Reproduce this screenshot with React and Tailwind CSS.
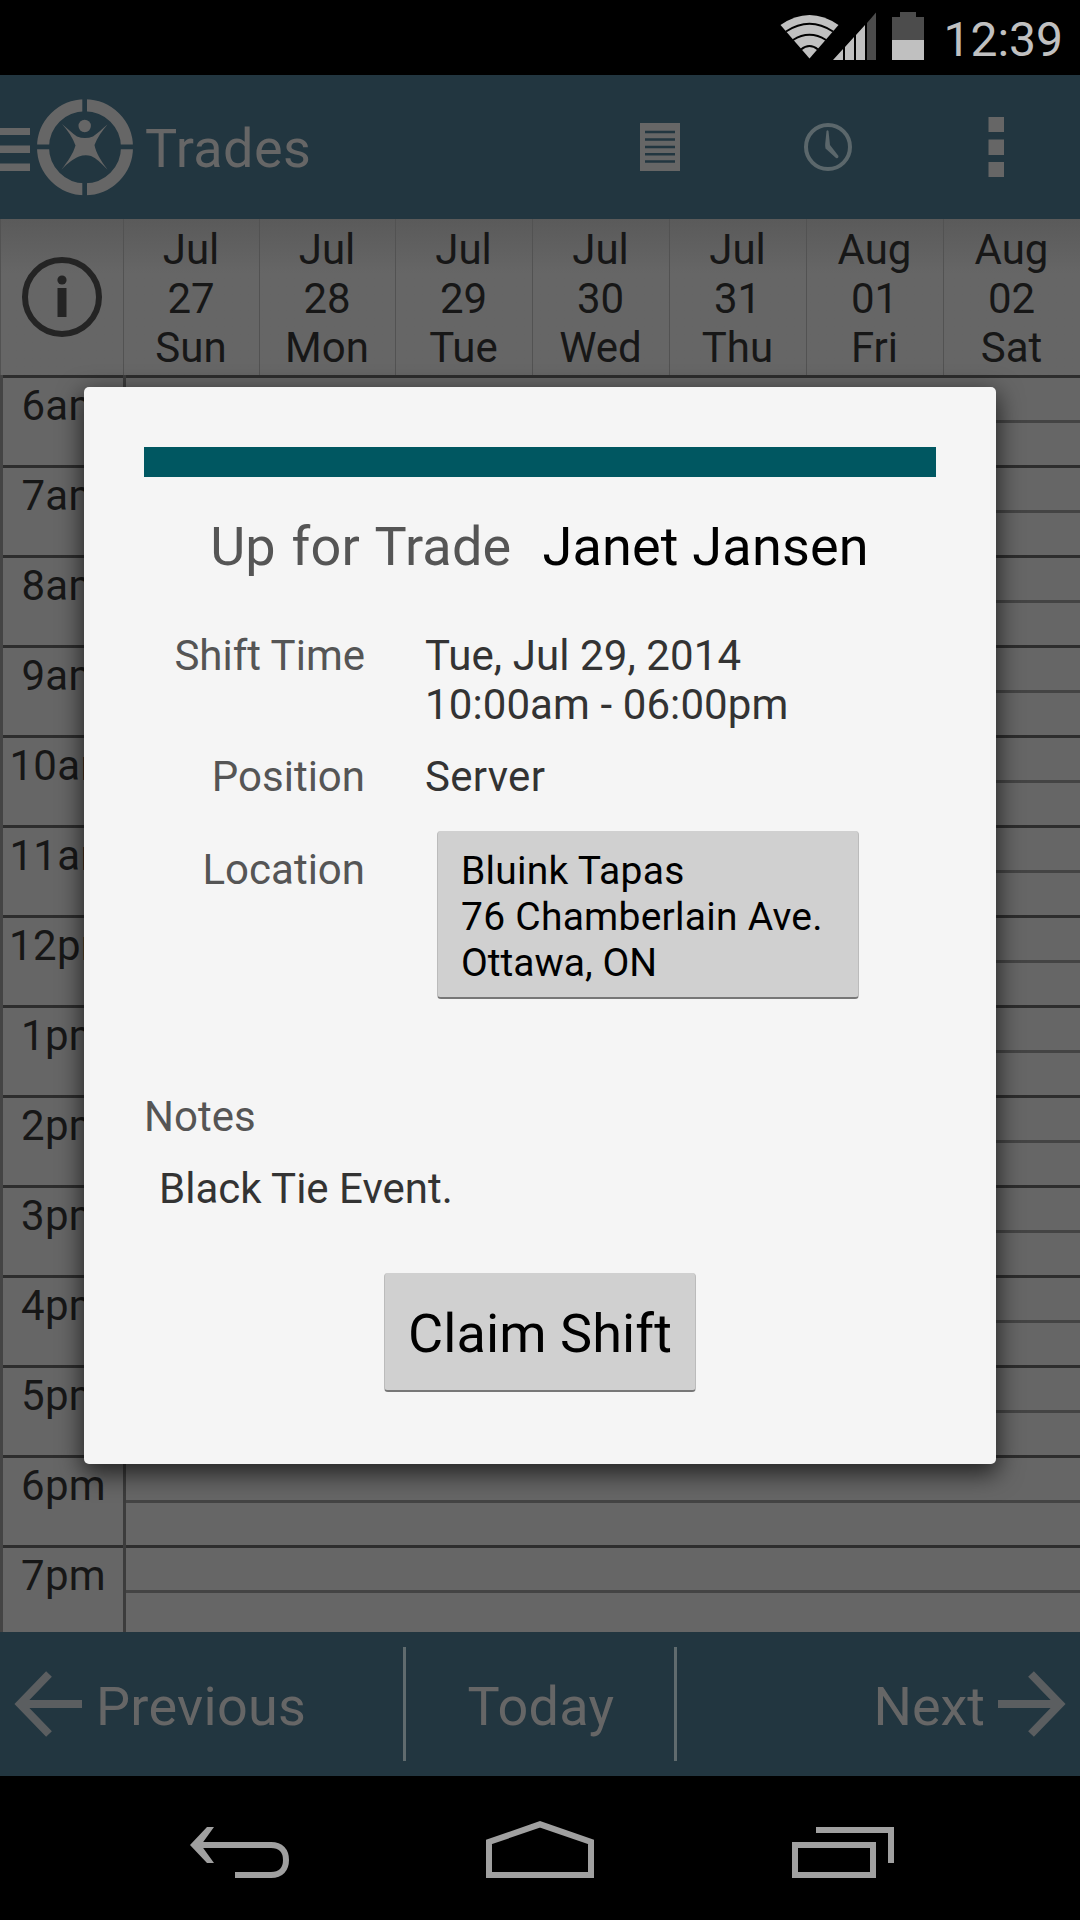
import { useState } from 'react'

const days = [
    ['Jul', '27', 'Sun'],
    ['Jul', '28', 'Mon'],
    ['Jul', '29', 'Tue'],
    ['Jul', '30', 'Wed'],
    ['Jul', '31', 'Thu'],
    ['Aug', '01', 'Fri'],
    ['Aug', '02', 'Sat'],
]

const hours = ['6am', '7am', '8am', '9am', '10am', '11am', '12pm', '1pm', '2pm', '3pm', '4pm', '5pm', '6pm', '7pm']

function StatusBar() {
    return (
        <div className="flex h-[75px] shrink-0 justify-end bg-black pr-[17px]">
            <svg className="h-[75px] w-[150px]" viewBox="778 0 150 75">
                <path d="M780.5 25 Q809.5 5 838.5 25 L809.5 58.5 Z" fill="#c0c0c0" />
                <g fill="none" stroke="#000" strokeWidth="2">
                    <path d="M786 31.500 Q809.500 16 833 31.500" />
                    <path d="M793 40 Q809.500 29.500 826 40" />
                    <path d="M801 49.500 Q809.500 42.500 818 49.500" />
                </g>
                <path d="M833 60 L843 49 V60 Z M845 47 L854 37 V60 H845 Z M856 35 L865 25 V60 H856 Z" fill="#c0c0c0" />
                <path d="M867 23 L876 12.500 V60 H867 Z" fill="#4c4c4c" />
                <path d="M892 17 H900 V12 H916 V17 H924 V40 H892 Z" fill="#4c4c4c" />
                <path d="M892 40 H924 V60 H892 Z" fill="#c0c0c0" />
            </svg>
            <span className="ml-[15px] mt-[12px] text-[48px] leading-[56px] text-[#c0c0c0]">12:39</span>
        </div>
    )
}

function ActionBar() {
    return (
        <div className="flex h-[144px] shrink-0 bg-[#223640] text-[#666]">
            <svg className="h-[144px] w-[145px]" viewBox="0 75 145 144" fill="#666">
                <path d="M0 128 H30 V135 H0 Z M0 145.500 H30 V153 H0 Z M0 163.500 H30 V171 H0 Z" />
                <circle cx="85" cy="147.300" r="42" fill="none" stroke="#666" strokeWidth="12" />
                <path d="M82.300 97 H87 V113 H82.300 Z M82.300 182 H87 V198 H82.300 Z M35 144.500 H51 V149.300 H35 Z M119 144.500 H135 V149.300 H119 Z" fill="#223640" />
                <circle cx="84.700" cy="126" r="6.200" />
                <path d="M62 124 C67 128 72 133 77 136.500 Q85 139.500 93 136.500 C98 133 102 129 107.500 124.500 C102 131 97 138 94.500 145 C96 153 101 161 107.500 169.500 C101 163 96 158 91 156 Q85 154.500 79 156.500 C73 159 68 163 61.500 169.500 C68 161 73 154 75.500 145.500 C73 138 68 131 62 124 Z" />
            </svg>
            <span className="mt-[42px] text-[54px] leading-[63px] tracking-[0.4px]">Trades</span>
            <svg className="ml-auto h-[144px] w-[460px]" viewBox="620 75 460 144" fill="#666">
                <path d="M640 123 H680 V171 H640 Z" />
                <path d="M645 132 H675 M645 139.500 H675 M645 147 H675 M645 154.300 H675 M645 161.500 H675" stroke="#223640" strokeWidth="2.500" />
                <circle cx="828" cy="147" r="22" fill="none" stroke="#5b676b" strokeWidth="4" />
                <path d="M826.500 131 Q827.500 129.500 828.500 131 L830 145 L838.500 156 Q838.500 159 836 158 L825.500 148.500 Q825 146 825.200 144 Z" fill="#5b676b" />
                <path d="M988.500 117 H1004 V132 H988.500 Z M988.500 139.500 H1004 V155 H988.500 Z M988.500 162 H1004 V177 H988.500 Z" />
            </svg>
        </div>
    )
}

function Calendar() {
    return (
        <div className="h-[1413px] shrink-0 overflow-hidden bg-[#666] text-[42px] leading-[49px] text-[#171717]">
            <div className="grid h-[156px] grid-cols-[123px_136px_136px_137px_137px_137px_137px_137px] bg-linear-to-b from-[#5a5a5a] to-[#666] to-35%">
                <div className="flex items-center justify-center border-l border-[#525252] pr-[1px]">
                    <svg className="size-[82px]" viewBox="0 0 82 82">
                        <circle cx="41" cy="41" r="37" fill="none" stroke="#242424" strokeWidth="6" />
                        <circle cx="41" cy="24" r="4.600" fill="#242424" />
                        <path d="M36.500 32 H45.500 V61 H36.500 Z" fill="#242424" />
                    </svg>
                </div>
                {days.map(([month, day, name]) => (
                    <div key={day} className="flex flex-col items-center border-l border-[#525252] pr-[1px] pt-[6px]">
                        <span>{month}</span>
                        <span>{day}</span>
                        <span>{name}</span>
                    </div>
                ))}
            </div>
            {hours.map((hour) => (
                <div key={hour} className="flex h-[90px] border-l-[3px] border-[#444]">
                    <div className="w-[120px] border-t-[3px] border-[#2d2d2d] pl-[1px] pt-[3px] text-center tracking-[0.3px]">{hour}</div>
                    <div className="w-[3px] bg-[#3c3c3c]"></div>
                    <div className="flex-1 border-t-[3px] border-[#2d2d2d] pt-[42px]">
                        <div className="h-[3px] bg-[#444]"></div>
                    </div>
                </div>
            ))}
        </div>
    )
}

function BottomBar() {
    return (
        <div className="flex h-[144px] shrink-0 items-center bg-[#223640] text-[54px] leading-[63px] tracking-[0.3px] text-[#666]">
            <button className="flex w-[403px] items-center pl-[14px]">
                <svg className="h-[66px] w-[69px]" viewBox="0 0 69 66" fill="none" stroke="#5b5e60" strokeWidth="8">
                    <path d="M68 33 H6 M35 3 L6 33 L35 63" />
                </svg>
                <span className="ml-[13px] mt-[4px]">Previous</span>
            </button>
            <div className="h-[114px] w-[3px] bg-[#606b6e]"></div>
            <button className="w-[268px] pl-[2px] pt-[4px] text-center">Today</button>
            <div className="h-[114px] w-[3px] bg-[#606b6e]"></div>
            <button className="flex flex-1 items-center justify-end pr-[14px]">
                <span className="mr-[12px] mt-[4px] tracking-normal">Next</span>
                <svg className="h-[66px] w-[69px]" viewBox="0 0 69 66" fill="none" stroke="#5b5e60" strokeWidth="8">
                    <path d="M1 33 H63 M34 3 L63 33 L34 63" />
                </svg>
            </button>
        </div>
    )
}

function NavBar() {
    return (
        <div className="flex h-[144px] shrink-0 items-center justify-center bg-black">
            <svg className="h-[144px] w-[780px]" viewBox="150 1776 780 144" fill="none" stroke="#a0a0a0" strokeWidth="6">
                <path d="M195 1845 H271 C281 1845 286 1851 286 1860 C286 1869 281 1875 271 1875 H235" />
                <path d="M207 1827 H214 L201 1845 L214 1863 H207 L190 1845 Z" fill="#a0a0a0" stroke="none" />
                <path d="M489 1875 V1842 L540 1824.300 L591 1842 V1875 Z" />
                <path d="M795 1845 H873 V1875 H795 Z" />
                <path d="M816 1830 H891 V1863" />
            </svg>
        </div>
    )
}

function ShiftDialog({ onClaim }) {
    return (
        <div className="h-[1077px] w-[912px] rounded-[5px] bg-[#f5f5f5] px-[60px] pt-[60px] text-[42px] leading-[49px] text-[#333] shadow-[0_8px_24px_2px_rgba(0,0,0,0.65)]">
            <div className="h-[30px] bg-[#005761]"></div>
            <div className="mt-[38px] flex justify-center gap-[31px] pr-[1px] text-[54px] leading-[63px] tracking-[0.2px]">
                <span className="text-[#555] [word-spacing:2px]">Up for Trade</span>
                <span className="text-black">Janet Jansen</span>
            </div>
            <div className="mt-[53px] grid grid-cols-[221px_1fr] gap-x-[60px]">
                <span className="text-right text-[#555]">Shift Time</span>
                <div className="tracking-[0.1px]">
                    <div>Tue, Jul 29, 2014</div>
                    <div>10:00am - 06:00pm</div>
                </div>
                <span className="mt-[23px] text-right text-[#555]">Position</span>
                <span className="mt-[23px] tracking-[0.3px]">Server</span>
                <span className="mt-[44px] text-right text-[#555]">Location</span>
                <button className="ml-[12px] mt-[30px] h-[168px] w-[422px] rounded-[4px] border-x border-b-2 border-x-[#bbb] border-b-[#777] bg-[#d0d0d0] pl-[23px] pt-[5px] text-left text-[39px] leading-[46px] tracking-[0.25px] text-black">
                    <div>Bluink Tapas</div>
                    <div>76 Chamberlain Ave.</div>
                    <div className="tracking-normal">Ottawa, ON</div>
                </button>
            </div>
            <div className="mt-[93px] text-[#555]">Notes</div>
            <div className="mt-[23px] pl-[15px]">Black Tie Event.</div>
            <button onClick={onClaim} className="mx-auto mt-[60px] block h-[119px] w-[312px] rounded-[4px] border-x border-b-2 border-x-[#bbb] border-b-[#777] bg-[#d0d0d0] pt-[4px] text-[54px] leading-[63px] tracking-[0.1px] text-black">
                Claim Shift
            </button>
        </div>
    )
}

function App() {
    const [open, setOpen] = useState(true)

    return (
        <div className="relative flex h-[1920px] w-[1080px] flex-col overflow-hidden font-['Roboto',sans-serif]">
            <StatusBar />
            <ActionBar />
            <Calendar />
            <BottomBar />
            <NavBar />
            {open && (
                <div className="absolute inset-0 flex items-start justify-center pt-[387px]">
                    <ShiftDialog onClaim={() => setOpen(false)} />
                </div>
            )}
        </div>
    )
}

export default App
